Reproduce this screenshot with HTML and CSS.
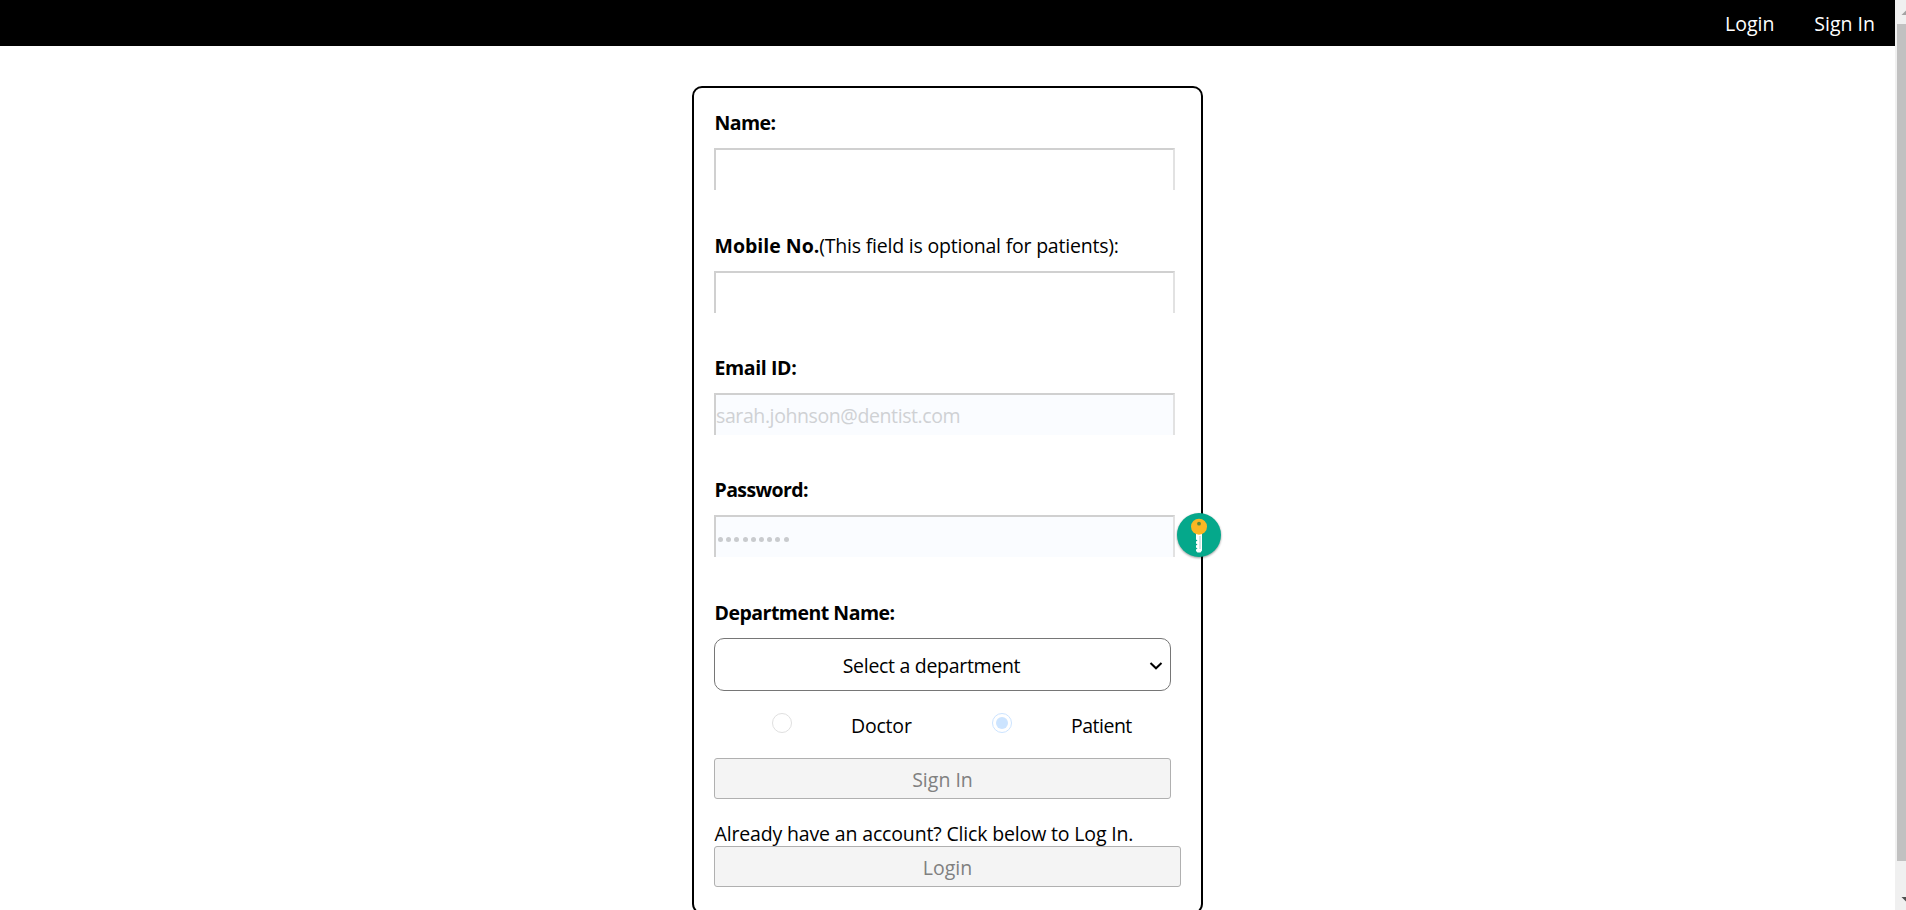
FILE: index.html
```
<!DOCTYPE html>
<html lang="en">
<head>
<meta charset="utf-8">
<title>Sign In</title>
<link rel="stylesheet" href="styles.css">
</head>
<body>
<div class="page">
  <nav class="navbar">
    <a class="nav-link">Login</a>
    <a class="nav-link">Sign In</a>
  </nav>
  <main class="content">
    <form class="card">
      <div class="field">
        <label class="label"><b class="l-name">Name:</b></label>
        <div class="input"></div>
      </div>
      <div class="field">
        <label class="label"><b>Mobile No.</b><span class="l-note">(This field is optional for patients):</span></label>
        <div class="input"></div>
      </div>
      <div class="field">
        <label class="label"><b class="l-email">Email ID:</b></label>
        <div class="input filled"><span class="v-email">sarah.johnson@dentist.com</span></div>
      </div>
      <div class="field">
        <label class="label"><b class="l-pass">Password:</b></label>
        <div class="input filled">
          <span class="dots"><i></i><i></i><i></i><i></i><i></i><i></i><i></i><i></i><i></i></span>
          <svg class="key" width="52" height="52" viewBox="-26 -26 52 52">
            <circle class="key-disc" r="22"/>
            <path fill="#fff" d="M-3 -2H3V15.500L1.500 17.500H-1.500L-3 16V14.500L-1.500 13.500L-3 12.500V10.500L-1.500 9.500L-3 8.500V6.500L-1.500 5.500L-3 4.500Z"/>
            <path stroke="#a5cfc7" stroke-width="1" d="M1 1V14"/>
            <circle cy="-8.300" r="8" fill="#fbb723"/>
            <circle cy="-11.300" r="1.900" fill="#5b8a3c"/>
          </svg>
        </div>
      </div>
      <label class="label"><b class="l-dept">Department Name:</b></label>
      <div class="select">
        <span class="s-text">Select a department</span>
        <svg class="chevron" width="14" height="10" viewBox="0 0 14 10"><path d="M1.500 2L7 7.300L12.500 2" fill="none" stroke="#000" stroke-width="2"/></svg>
      </div>
      <div class="radios">
        <span class="radio"></span><span class="radio-text r-doc">Doctor</span>
        <span class="radio checked"></span><span class="radio-text r-pat">Patient</span>
      </div>
      <div class="button">Sign In</div>
      <p class="hint">Already have an account? Click below to Log In.</p>
      <div class="button wide">Login</div>
    </form>
  </main>
</div>
<div class="scrollbar">
  <svg class="arrow" width="11" height="24" viewBox="0 0 11 24"><path d="M6.500 15L11 10.500V15Z" fill="#a3a3a3"/></svg>
  <div class="thumb"></div>
  <svg class="arrow" width="11" height="49" viewBox="0 0 11 49"><path d="M6.500 36L11 40.500V36Z" fill="#505050"/></svg>
</div>
</body>
</html>
```
FILE: styles.css
```
* { box-sizing: border-box; }
body {
  margin: 0;
  height: 910px;
  display: flex;
  overflow: hidden;
  background: #fff;
  color: #000;
  font: 19.5px/26px "Open Sans", "Noto Sans", sans-serif;
  white-space: nowrap;
}
.page { width: 1895px; height: 910px; overflow: hidden; }
.navbar {
  height: 46px;
  display: flex;
  justify-content: flex-end;
  gap: 40px;
  padding: 11px 20px 0 0;
  background: #000;
  color: #fff;
}
.content { display: flex; justify-content: center; padding-top: 40px; }
.card {
  width: 511px;
  height: 828px;
  flex: none;
  padding: 17.3px 20px 0 20px;
  border: 2px solid #000;
  border-radius: 10px;
}
.field { height: 122.35px; }
.label { display: block; height: 35px; line-height: 35.2px; margin-bottom: 8px; padding-left: .5px; }
.l-name { letter-spacing: -.6px; }
.l-note { letter-spacing: -.21px; }
.l-email { letter-spacing: -.38px; }
.l-pass { letter-spacing: -.6px; }
.l-dept { letter-spacing: -.51px; }
.v-email { letter-spacing: -.4px; padding-top: 2px; }
.s-text { letter-spacing: -.3px; }
.r-doc { letter-spacing: -.2px; }
.r-pat { letter-spacing: -.5px; }
.input {
  position: relative;
  width: 461px;
  height: 42px;
  display: flex;
  align-items: center;
  border: 2px solid #d0d0d0;
  border-right-color: #e2e2e2;
  border-bottom: 0;
}
.filled { background: #fafcff; color: #cfd1d4; }
.dots { display: flex; gap: 3.200px; padding: 5px 0 0 2px; }
.dots i { width: 5px; height: 5px; border-radius: 50%; background: #c9cbce; }
.key { position: absolute; left: 457px; top: -8px; }
.key-disc { fill: #05a88b; filter: drop-shadow(0 1px 1px rgba(0,0,0,.4)); }
.select {
  position: relative;
  width: 457px;
  height: 53px;
  display: flex;
  align-items: center;
  justify-content: center;
  padding: 3px 22px 0 0;
  border: 1px solid #767676;
  border-radius: 10px;
}
.chevron { position: absolute; right: 7px; top: 22px; }
.radios { height: 67px; display: flex; align-items: center; padding-left: 58px; }
.radio {
  position: relative;
  width: 20px;
  height: 20px;
  flex: none;
  margin-bottom: 3px;
  border: 1px solid #e0e0e0;
  border-radius: 50%;
}
.radio.checked { border-color: #cce4ff; }
.radio.checked::after { content: ""; position: absolute; inset: 3px; border-radius: 50%; background: #cce4ff; }
.radio-text { width: 200px; flex: none; padding-left: 59px; margin-top: 4px; }
.button {
  width: 457px;
  height: 41px;
  display: flex;
  align-items: center;
  justify-content: center;
  padding-top: 3px;
  border: 1px solid #b0b0b0;
  border-radius: 3px;
  background: #f4f4f4;
  color: #808080;
}
.button.wide { width: 467px; }
.hint { margin: 22px 0 -1px; padding-left: .5px; height: 26px; letter-spacing: -.155px; }
.scrollbar { width: 11px; height: 910px; background: #f0f0f0; }
.arrow { display: block; }
.thumb { height: 837px; margin-left: 2px; background: #c1c1c1; }
```
